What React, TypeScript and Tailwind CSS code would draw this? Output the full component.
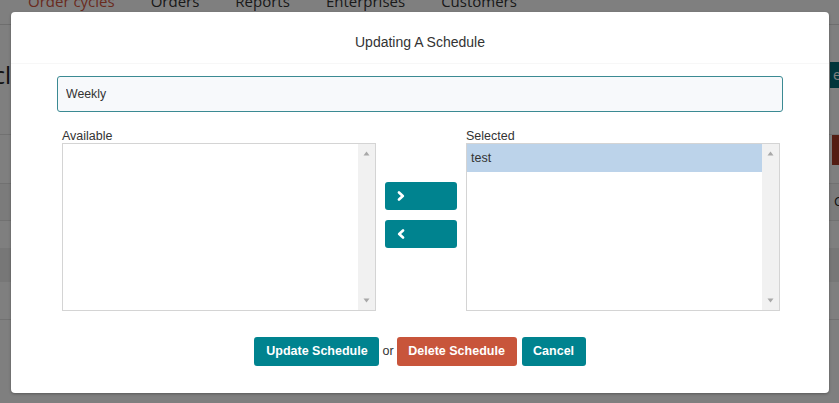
import React from 'react';

const sans = { fontFamily: '"Liberation Sans", Arial, sans-serif' };

const ScrollTrack: React.FC = () => (
  <div className="flex w-[17px] flex-col items-center justify-between bg-[#f1f1f1] py-[7px]">
    <svg width="7" height="5" viewBox="0 0 7 5">
      <path d="M3.5 0.5 L6.5 4.5 L0.5 4.5 Z" fill="#a8a8a8" />
    </svg>
    <svg width="7" height="5" viewBox="0 0 7 5">
      <path d="M0.5 0.5 L6.5 0.5 L3.5 4.5 Z" fill="#a8a8a8" />
    </svg>
  </div>
);

interface ListBoxProps {
  label: string;
  items: string[];
  selected?: string;
}

const ListBox: React.FC<ListBoxProps> = ({ label, items, selected }) => (
  <div className="flex w-[314px] flex-col">
    <label className="h-[14px] text-[12.5px] leading-[14px] text-[#333]">{label}</label>
    <div className="flex h-[168px] border border-[#d4d4d4] bg-white">
      <div className="flex flex-1 flex-col">
        {items.map((item) => (
          <div
            key={item}
            className={
              item === selected
                ? 'h-[28px] bg-[#bcd3ea] pl-[4px] text-[12.5px] leading-[28px] text-[#333]'
                : 'h-[28px] pl-[4px] text-[12.5px] leading-[28px] text-[#333]'
            }
          >
            {item}
          </div>
        ))}
      </div>
      <ScrollTrack />
    </div>
  </div>
);

const Chevron: React.FC<{ dir: 'left' | 'right' }> = ({ dir }) => (
  <svg width="8" height="10" viewBox="0 0 8 10">
    <path
      d={dir === 'right' ? 'M2 1.5 L5.8 5 L2 8.5' : 'M6 1.5 L2.2 5 L6 8.5'}
      fill="none"
      stroke="#fff"
      strokeWidth="2.6"
      strokeLinecap="round"
      strokeLinejoin="round"
    />
  </svg>
);

const ScheduleModal: React.FC = () => (
  <div
    className="absolute left-[11px] top-[12px] flex h-[381px] w-[818px] flex-col rounded-[4px] bg-white shadow-[0_1px_3px_rgba(0,0,0,0.3)]"
    style={sans}
  >
    <div className="h-[52px] border-b border-[#f7f7f7] pt-[20px] text-center text-[14px] leading-[20px] text-[#333]">
      Updating A Schedule
    </div>

    <div className="flex flex-col px-[46px] pt-[12px]">
      <input
        readOnly
        value="Weekly"
        className="h-[36px] w-full rounded-[3px] border border-[#3b8a93] bg-[#f7f9fb] px-[8px] text-[12.3px] text-[#333] outline-none"
      />

      <div className="ml-[5px] mt-[17px] flex">
        <ListBox label="Available" items={[]} />
        <div className="flex w-[90px] flex-col items-center gap-[10px] pt-[53px]">
          <button className="flex h-[28px] w-[72px] items-center rounded-[3px] bg-[#00838f] pl-[12px]">
            <Chevron dir="right" />
          </button>
          <button className="flex h-[28px] w-[72px] items-center rounded-[3px] bg-[#00838f] pl-[12px]">
            <Chevron dir="left" />
          </button>
        </div>
        <ListBox label="Selected" items={['test']} selected="test" />
      </div>

      <div className="mt-[26px] flex items-center justify-center">
        <button className="h-[29px] w-[125px] rounded-[3px] bg-[#00838f] text-[12.5px] font-bold text-white">
          Update Schedule
        </button>
        <span className="mx-[3px] text-[12.5px] text-[#333]">or</span>
        <button className="h-[29px] w-[120px] rounded-[3px] bg-[#c8553b] text-[12.5px] font-bold text-white">
          Delete Schedule
        </button>
        <button className="ml-[5px] h-[29px] w-[64px] rounded-[3px] bg-[#00838f] text-[12.5px] font-bold text-white">
          Cancel
        </button>
      </div>
    </div>
  </div>
);

const navItems = ['Order cycles', 'Orders', 'Reports', 'Enterprises', 'Customers'];

const BackgroundPage: React.FC = () => (
  <div className="flex h-full flex-col bg-white" style={{ fontFamily: '"Open Sans", sans-serif' }}>
    <nav className="flex h-[25px] items-start gap-[36px] border-b border-[#dcdcdc] pl-[28px]">
      {navItems.map((item, i) => (
        <span
          key={item}
          className={
            i === 0
              ? '-mt-[8px] text-[15px] leading-[18px] text-[#d4573f]'
              : '-mt-[8px] text-[15px] leading-[18px] text-[#333]'
          }
        >
          {item}
        </span>
      ))}
    </nav>

    <div className="flex h-[110px] items-start justify-between border-b border-[#e2e2e2]">
      <div className="mt-[36px] flex w-[11px] justify-end overflow-hidden whitespace-nowrap text-[24px] leading-[28px] text-[#222]">
        Order cycl
      </div>
      <div className="mt-[37px] flex w-[9px] overflow-hidden">
        <div className="h-[26px] w-[60px] shrink-0 bg-[#006b77] pl-[3px] text-[14px] leading-[26px] text-white">
          e
        </div>
      </div>
    </div>

    <div className="flex h-[48px] items-start justify-end">
      <div className="h-[30px] w-[7px] bg-[#a83a27]" />
    </div>

    <div className="flex h-[37px] items-center justify-end border-t border-[#e2e2e2] bg-[#f7f7f7]">
      <div className="w-[5px] overflow-hidden text-[13px] text-[#222]">C</div>
    </div>

    <div className="flex h-[28px] border-t border-[#e2e2e2]" />
    <div className="flex h-[34px] bg-[#eeeeee]" />
    <div className="flex h-[38px] border-b border-[#e2e2e2]" />
    <div className="flex-1" />
  </div>
);

export default function App() {
  return (
    <div className="relative h-[403px] w-[839px] overflow-hidden">
      <BackgroundPage />
      <div className="absolute inset-0 bg-black/50" />
      <ScheduleModal />
    </div>
  );
}
